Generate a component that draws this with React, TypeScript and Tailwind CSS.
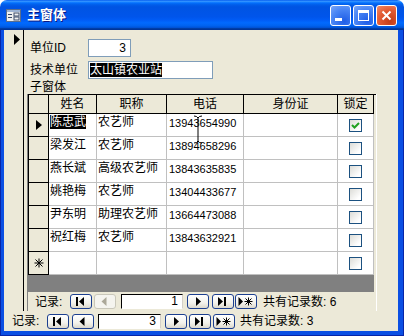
import React from "react";

const rows = [
  { name: "陈忠武", title: "农艺师", phone: "13943654990", locked: true },
  { name: "梁发江", title: "农艺师", phone: "13894658296", locked: false },
  { name: "燕长斌", title: "高级农艺师", phone: "13843635835", locked: false },
  { name: "姚艳梅", title: "农艺师", phone: "13404433677", locked: false },
  { name: "尹东明", title: "助理农艺师", phone: "13664473088", locked: false },
  { name: "祝红梅", title: "农艺师", phone: "13843632921", locked: false },
];

type Kind = "first" | "prev" | "next" | "last" | "new";

function Glyph({ kind, color }: { kind: Kind; color: string }) {
  return (
    <svg width="20" height="13" viewBox="0 0 20 13">
      {kind === "first" && (
        <>
          <rect x="5" y="2" width="2" height="9" fill={color} />
          <polygon points="8,6.5 13,2 13,11" fill={color} />
        </>
      )}
      {kind === "prev" && <polygon points="6.5,6.5 11.5,2 11.5,11" fill={color} />}
      {kind === "next" && <polygon points="13,6.5 8,2 8,11" fill={color} />}
      {kind === "last" && (
        <>
          <polygon points="10,6.5 5,2 5,11" fill={color} />
          <rect x="11" y="2" width="2" height="9" fill={color} />
        </>
      )}
      {kind === "new" && (
        <>
          <polygon points="7,6.5 2.5,2 2.5,11" fill={color} />
          <g stroke={color} strokeWidth="1">
            <line x1="12.5" y1="2.5" x2="12.5" y2="10.5" />
            <line x1="8.5" y1="6.5" x2="16.5" y2="6.5" />
            <line x1="9.5" y1="3.5" x2="15.5" y2="9.5" />
            <line x1="15.5" y1="3.5" x2="9.5" y2="9.5" />
          </g>
        </>
      )}
    </svg>
  );
}

function NavBtn({ kind, off }: { kind: Kind; off?: boolean }) {
  return (
    <div
      className={`w-[22px] h-[15px] shrink-0 rounded-[3px] border flex items-center justify-center ${
        off
          ? "border-[#c9c7ba] bg-[#f5f4ef]"
          : "border-[#1c3f8f] bg-[linear-gradient(to_bottom,#ffffff,#f3f2ec_60%,#dcd8cc)]"
      }`}
    >
      <Glyph kind={kind} color={off ? "#aca899" : "#000000"} />
    </div>
  );
}

function Check({ on }: { on?: boolean }) {
  return (
    <div className="w-[13px] h-[13px] border border-[#1c5180] bg-[linear-gradient(135deg,#dcdcd7,#ffffff_80%)] flex items-center justify-center">
      {on && (
        <svg width="9" height="9" viewBox="0 0 9 9">
          <path d="M1 4 L3.5 6.5 L8 2" stroke="#21a121" strokeWidth="2" fill="none" />
        </svg>
      )}
    </div>
  );
}

function Row({ r, first }: { r?: (typeof rows)[number]; first?: boolean }) {
  return (
    <div className="flex h-[23px]">
      <div className="w-[21px] shrink-0 border-l border-r border-b border-black bg-[#ece9d8] flex items-center justify-center">
        {first && (
          <svg width="6" height="10" viewBox="0 0 6 10">
            <polygon points="0,0 6,5 0,10" fill="#000" />
          </svg>
        )}
        {!r && (
          <svg width="10" height="10" viewBox="0 0 10 10">
            <g stroke="#000" strokeWidth="1">
              <line x1="5" y1="0.5" x2="5" y2="9.5" />
              <line x1="0.5" y1="5" x2="9.5" y2="5" />
              <line x1="1.5" y1="1.5" x2="8.5" y2="8.5" />
              <line x1="8.5" y1="1.5" x2="1.5" y2="8.5" />
            </g>
          </svg>
        )}
      </div>
      <div className="w-[48px] shrink-0 border-r border-b border-[#c0c0c0] bg-white pl-[1px] pt-[1px] leading-[14px]">
        {r && (first ? <span className="bg-black text-white">{r.name}</span> : r.name)}
      </div>
      <div className="w-[70px] shrink-0 border-r border-b border-[#c0c0c0] bg-white pl-[1px] pt-[1px] leading-[14px]">
        {r?.title}
      </div>
      <div className="w-[77px] shrink-0 border-r border-b border-[#c0c0c0] bg-white pl-[2px] pt-[2px] leading-[14px] text-[11px]">
        {r?.phone}
      </div>
      <div className="w-[94px] shrink-0 border-r border-b border-[#c0c0c0] bg-white" />
      <div className="w-[36px] shrink-0 border-r border-b border-[#c0c0c0] bg-white flex justify-center pt-[5px]">
        <Check on={r?.locked} />
      </div>
    </div>
  );
}

function TitleBar() {
  return (
    <div className="h-[30px] shrink-0 rounded-t-[7px] flex items-center bg-[linear-gradient(to_bottom,#0058ee_0%,#3593ff_4%,#288eff_6%,#127dff_8%,#036ffc_10%,#0262ee_14%,#0057e5_20%,#0054e3_24%,#0055eb_56%,#005bf5_66%,#026afe_76%,#0062ef_86%,#0052d6_92%,#0040ab_94%,#003092_100%)]">
      <svg className="ml-[6px]" width="15" height="13" viewBox="0 0 15 13">
        <rect x="0.5" y="0.5" width="14" height="12" fill="#f0f0f0" stroke="#5a6e8c" />
        <rect x="1" y="1" width="13" height="2" fill="#9fb4d4" />
        <g fill="#3c4c6c">
          <rect x="2" y="5" width="4" height="1" />
          <rect x="2" y="8" width="4" height="1" />
          <rect x="8" y="4" width="5" height="3" fill="none" stroke="#3c4c6c" strokeWidth="1" />
          <rect x="8" y="8" width="5" height="3" fill="none" stroke="#3c4c6c" strokeWidth="1" />
        </g>
      </svg>
      <span className="ml-[6px] text-[13px] font-bold text-white leading-[16px] [text-shadow:1px_1px_0_#0a1883]">
        主窗体
      </span>
      <div className="ml-auto mr-[7px] flex gap-[2px]">
        <div className="w-[21px] h-[21px] rounded-[3px] border border-white bg-[radial-gradient(circle_at_70%_80%,#1f5de6,#4a86f5_60%,#7aa6f7)] flex items-end">
          <div className="ml-[4px] mb-[4px] w-[7px] h-[3px] bg-white" />
        </div>
        <div className="w-[21px] h-[21px] rounded-[3px] border border-white bg-[radial-gradient(circle_at_70%_80%,#1f5de6,#4a86f5_60%,#7aa6f7)] flex items-center justify-center">
          <div className="w-[11px] h-[11px] border border-white border-t-[3px]" />
        </div>
        <div className="w-[21px] h-[21px] rounded-[3px] border border-white bg-[radial-gradient(circle_at_70%_80%,#c43d18,#e35b33_55%,#f08b68)] flex items-center justify-center">
          <svg width="11" height="11" viewBox="0 0 11 11">
            <path d="M1.5 1.5 L9.5 9.5 M9.5 1.5 L1.5 9.5" stroke="#fff" strokeWidth="2" />
          </svg>
        </div>
      </div>
    </div>
  );
}

export default function App() {
  return (
    <div className="relative w-[404px] h-[336px] flex flex-col bg-white font-['Liberation_Sans','Noto_Sans_CJK_SC',sans-serif] text-[12px] text-black">
      <TitleBar />
      <div className="flex-1 min-h-0 flex flex-col bg-[#0b4fe3] border-x border-b border-[#0725a8] pl-[3px] pr-[5px] pb-[4px]">
        <div className="flex-1 min-h-0 flex flex-col bg-[#ece9d8]">
          <div className="h-[281px] flex">
            {/* record selector */}
            <div className="w-[20px] shrink-0 border-r border-black pl-[10px] pt-[4px]">
              <svg width="6" height="11" viewBox="0 0 6 11">
                <polygon points="0,0 6,5.5 0,11" fill="#000" />
              </svg>
            </div>
            <div className="flex-1 flex flex-col pt-[9px]">
              <div className="flex items-center h-[18px]">
                <span className="w-[64px] pl-[6px] leading-[14px]">单位ID</span>
                <div className="w-[43px] h-[18px] border border-[#7f9db9] bg-white text-right pr-[4px] leading-[16px]">3</div>
              </div>
              <div className="flex items-center h-[18px] mt-[4px]">
                <span className="w-[64px] pl-[6px] leading-[14px]">技术单位</span>
                <div className="w-[125px] h-[18px] border border-[#7f9db9] bg-white pl-[1px] leading-[16px]">
                  <span className="bg-black text-white">太山镇农业站</span>
                </div>
              </div>
              <div className="h-[13px] mt-[2px] pl-[6px] leading-[13px]">子窗体</div>
              {/* subform */}
              <div className="ml-[3px] w-[350px] h-[217px] flex flex-col border-l border-[#808080] border-r border-r-white">
                <div className="flex h-[20px] border-t border-black">
                  <div className="w-[21px] shrink-0 border-l border-r border-b border-black" />
                  <div className="w-[48px] shrink-0 border-r border-b border-black text-center leading-[18px]">姓名</div>
                  <div className="w-[70px] shrink-0 border-r border-b border-black text-center leading-[18px]">职称</div>
                  <div className="w-[77px] shrink-0 border-r border-b border-black text-center leading-[18px]">电话</div>
                  <div className="w-[94px] shrink-0 border-r border-b border-black text-center leading-[18px]">身份证</div>
                  <div className="w-[36px] shrink-0 border-r border-b border-black text-center leading-[18px]">锁定</div>
                </div>
                {rows.map((r, i) => (
                  <Row key={r.phone} r={r} first={i === 0} />
                ))}
                <Row />
                <div className="w-[346px] h-[17px] bg-[#808080]" />
                <div className="flex-1 flex items-center pl-[7px]">
                  <span className="w-[35px] shrink-0 leading-[14px]">记录:</span>
                  <NavBtn kind="first" />
                  <div className="ml-[2px]">
                    <NavBtn kind="prev" off />
                  </div>
                  <div className="ml-[5px] w-[62px] h-[15px] bg-white border-t border-l border-black border-r border-r-[#d4d0c8] border-b border-b-white text-right pr-[4px] leading-[13px]">
                    1
                  </div>
                  <div className="ml-[4px]">
                    <NavBtn kind="next" />
                  </div>
                  <div className="ml-[3px]">
                    <NavBtn kind="last" />
                  </div>
                  <div className="ml-[1px]">
                    <NavBtn kind="new" />
                  </div>
                  <span className="ml-[6px] leading-[14px]">共有记录数: 6</span>
                </div>
              </div>
            </div>
          </div>
          {/* main navigation */}
          <div className="h-[20px] flex items-center pl-[8px]">
            <span className="w-[35px] shrink-0 leading-[14px]">记录:</span>
            <NavBtn kind="first" />
            <div className="ml-[3px]">
              <NavBtn kind="prev" />
            </div>
            <div className="ml-[4px] w-[63px] h-[15px] bg-white border-t border-l border-black border-r border-r-[#d4d0c8] border-b border-b-white text-right pr-[4px] leading-[13px]">
              3
            </div>
            <div className="ml-[4px]">
              <NavBtn kind="next" />
            </div>
            <div className="ml-[2px]">
              <NavBtn kind="last" />
            </div>
            <div className="ml-[2px]">
              <NavBtn kind="new" />
            </div>
            <span className="ml-[5px] leading-[14px]">共有记录数: 3</span>
          </div>
        </div>
      </div>
      {/* text cursor over the phone column */}
      <svg className="absolute left-[193px] top-[115px]" width="10" height="30" viewBox="0 0 10 30">
        <path d="M1 1 Q4 1 5 3 Q6 1 9 1 M5 3 V26 M1 28 Q4 28 5 26 Q6 28 9 28" stroke="#000" strokeWidth="1" fill="none" />
      </svg>
    </div>
  );
}
